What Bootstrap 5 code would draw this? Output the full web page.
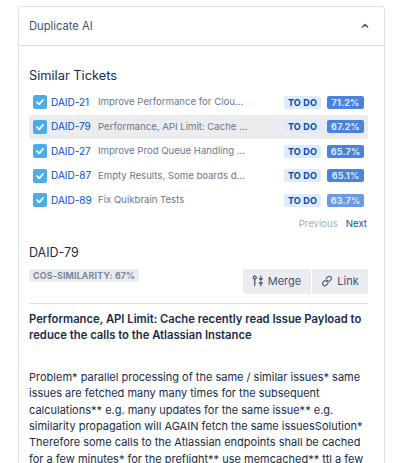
<!doctype html>
<html lang="en"><head><meta charset="utf-8">
<link rel="stylesheet" href="https://cdn.jsdelivr.net/npm/bootstrap@5.3.0/dist/css/bootstrap.min.css">
<style>
html,body{height:463px;overflow:hidden;background:#fff}
body{font-family:Inter,"Liberation Sans",sans-serif;color:#172b4d;padding:6px 34px 0 18px}
.panel-box{border:1px solid #dfe1e6;border-bottom:0;border-radius:4px 4px 0 0;height:470px}
.panel-head{height:39px;padding:0 15px 0 10px;border-bottom:1px solid #dfe1e6;font-size:11.2px;color:#42526e}
.panel-body{padding:0 10px 0 10px}
.sim-title{font-size:12.8px;line-height:20px;margin:20px 0 4px;font-weight:400}
.tick-row{height:24.5px;padding:0 0 0 4px;font-size:10px;width:339px}
.tick-row.active-row{background:#ebecf0;border-radius:2px}
.chk{width:14px;height:14px;background:#4bade8;border-radius:2px;flex:none;margin-right:4px}
.tick-key{color:#0052cc;width:47px;flex:none;font-size:10px;white-space:nowrap}
.tick-sum{color:#6b778c;width:186px;flex:none;white-space:nowrap;overflow:hidden;font-size:9.6px}
.lozenge{background:#deebff;color:#0747a6;font-weight:700;font-size:9px;border-radius:2px;height:13px;line-height:13px;width:37px;text-align:center;flex:none;margin-right:6px;letter-spacing:.2px}
.score{color:#deebff;font-weight:700;font-size:9px;border-radius:2px;height:13px;line-height:13px;width:37px;text-align:center;flex:none;letter-spacing:.2px}
.pager{font-size:9.6px;margin:2px 6px 0 0;padding-right:1px;height:20px;gap:8px}
.pager .prev{color:#a5adba}.pager .nxt{color:#0052cc}
.det-key{font-size:12.5px;line-height:18px;margin:9px 0 5px;font-weight:400}
.cos{background:#ebecf0;color:#7a869a;font-size:8.8px;font-weight:700;border-radius:2px;height:13px;line-height:13px;padding:0 4px;letter-spacing:.2px;align-self:flex-start;margin-top:2px}
.act-btn{background:#ebecf0;color:#42526e;font-size:11px;height:25px;border:0;border-radius:0;padding:0;gap:4px;margin-top:2px;width:56px}
.act-btn.first{border-radius:3px 0 0 3px;margin-right:1.5px;width:68px}
.rule{border-top:1px solid #dfe1e6;margin:9px 0 0;width:339px}
.det-sum{font-size:11.25px;font-weight:600;line-height:16.3px;margin:7px 0 0;color:#172b4d}
.det-text{font-size:11px;line-height:16.3px;margin:26px 0 0;color:#172b4d;white-space:nowrap}
</style></head><body>
<div class="panel-box">
<div class="panel-head d-flex align-items-center justify-content-between"><span>Duplicate AI</span>
<svg width="8" height="8" viewBox="0 0 8 8"><path d="M1.3 5 4 2.6 6.7 5" fill="none" stroke="#42526e" stroke-width="1.5" stroke-linecap="round" stroke-linejoin="round"/></svg></div>
<div class="panel-body">
<h2 class="sim-title">Similar Tickets</h2>
<div class="tick-row d-flex align-items-center"><span class="chk d-flex align-items-center justify-content-center"><svg width="10" height="10" viewBox="0 0 10 10"><path d="M2 5.2 4.2 7.4 8 3" fill="none" stroke="#fff" stroke-width="1.8" stroke-linecap="round" stroke-linejoin="round"/></svg></span><span class="tick-key">DAID-21</span><span class="tick-sum">Improve Performance for Clou...</span><span class="lozenge">TO DO</span><span class="score" style="background:#4a83dc">71.2%</span></div>
<div class="tick-row active-row d-flex align-items-center"><span class="chk d-flex align-items-center justify-content-center"><svg width="10" height="10" viewBox="0 0 10 10"><path d="M2 5.2 4.2 7.4 8 3" fill="none" stroke="#fff" stroke-width="1.8" stroke-linecap="round" stroke-linejoin="round"/></svg></span><span class="tick-key">DAID-79</span><span class="tick-sum">Performance, API Limit: Cache ...</span><span class="lozenge">TO DO</span><span class="score" style="background:#4a83dc">67.2%</span></div>
<div class="tick-row d-flex align-items-center"><span class="chk d-flex align-items-center justify-content-center"><svg width="10" height="10" viewBox="0 0 10 10"><path d="M2 5.2 4.2 7.4 8 3" fill="none" stroke="#fff" stroke-width="1.8" stroke-linecap="round" stroke-linejoin="round"/></svg></span><span class="tick-key">DAID-27</span><span class="tick-sum">Improve Prod Queue Handling ...</span><span class="lozenge">TO DO</span><span class="score" style="background:#4a83dc">65.7%</span></div>
<div class="tick-row d-flex align-items-center"><span class="chk d-flex align-items-center justify-content-center"><svg width="10" height="10" viewBox="0 0 10 10"><path d="M2 5.2 4.2 7.4 8 3" fill="none" stroke="#fff" stroke-width="1.8" stroke-linecap="round" stroke-linejoin="round"/></svg></span><span class="tick-key">DAID-87</span><span class="tick-sum">Empty Results, Some boards d...</span><span class="lozenge">TO DO</span><span class="score" style="background:#4a83dc">65.1%</span></div>
<div class="tick-row d-flex align-items-center"><span class="chk d-flex align-items-center justify-content-center"><svg width="10" height="10" viewBox="0 0 10 10"><path d="M2 5.2 4.2 7.4 8 3" fill="none" stroke="#fff" stroke-width="1.8" stroke-linecap="round" stroke-linejoin="round"/></svg></span><span class="tick-key">DAID-89</span><span class="tick-sum">Fix Quikbrain Tests</span><span class="lozenge">TO DO</span><span class="score" style="background:#6b9ae3">63.7%</span></div>
<div class="pager d-flex justify-content-end align-items-center"><span class="prev">Previous</span><span class="nxt">Next</span></div>
<h3 class="det-key">DAID-79</h3>
<div class="d-flex justify-content-between" style="width:339px"><span class="cos">COS-SIMILARITY: 67%</span>
<div class="d-flex"><button class="act-btn first d-flex align-items-center justify-content-center"><svg width="12" height="12" viewBox="0 0 12 12" fill="none" stroke="#42526e" stroke-width="1.2" stroke-linecap="round" stroke-linejoin="round"><circle cx="2.8" cy="2.6" r="1.5"/><path d="M2.8 4.2V10.6M8.8 1.2V5.2M7.2 3.6 8.8 5.2 10.4 3.6M8.8 6.8V10.8M7.2 8.4 8.8 6.8 10.4 8.4"/></svg>Merge</button><button class="act-btn d-flex align-items-center justify-content-center"><svg width="12" height="12" viewBox="0 0 12 12" fill="none" stroke="#42526e" stroke-width="1.1" stroke-linecap="round"><path d="M5.2 3.4 6.8 1.9a2.1 2.1 0 0 1 3 3L8.3 6.4a2.1 2.1 0 0 1-3 0"/><path d="M6.8 8.6 5.2 10.1a2.1 2.1 0 0 1-3-3L3.7 5.6a2.1 2.1 0 0 1 3 0"/></svg>Link</button></div></div>
<div class="rule"></div>
<p class="det-sum">Performance, API Limit: Cache recently read Issue Payload to<br>reduce the calls to the Atlassian Instance</p>
<p class="det-text">Problem* parallel processing of the same / similar issues* same<br>issues are fetched many many times for the subsequent<br>calculations** e.g. many updates for the same issue** e.g.<br>similarity propagation will AGAIN fetch the same issuesSolution*<br>Therefore some calls to the Atlassian endpoints shall be cached<br>for a few minutes* for the preflight** use memcached** ttl a few</p>
</div></div>
</body></html>
